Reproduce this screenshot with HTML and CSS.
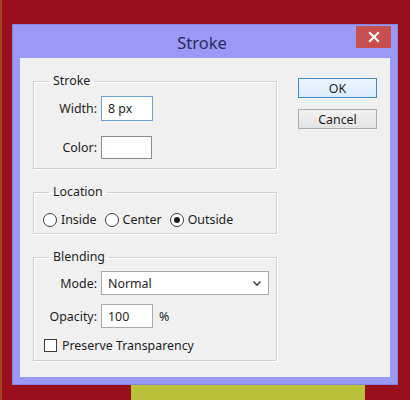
FILE: index.html
```html
<html>
<head>
	<title>Stroke</title>
	<meta name="viewport" content="width=device-width, initial-scale=1.0">
	<link rel="stylesheet" href="styles.css">
</head>
<body>
	<div id="dialog">
		<div id="titleBar">
			<span></span>
			<span id="title">Stroke</span>
			<span id="closeButton">
				<svg width="12" height="12" viewBox="0 0 12 12"><path d="M2 2 L10 10 M10 2 L2 10" stroke="#ffffff" stroke-width="2.2" stroke-linecap="square"/></svg>
			</span>
		</div>
		<div id="panel">
			<div id="groups">
				<fieldset class="group" id="strokeGroup">
					<legend>Stroke</legend>
					<div class="row">
						<label class="label">Width:</label>
						<div class="field focused small">8 px</div>
					</div>
					<div class="row">
						<label class="label">Color:</label>
						<div class="field small swatch"></div>
					</div>
				</fieldset>

				<fieldset class="group" id="locationGroup">
					<legend>Location</legend>
					<div class="radios">
						<label class="radio"><span class="circle"></span>Inside</label>
						<label class="radio"><span class="circle"></span>Center</label>
						<label class="radio"><span class="circle checked"></span>Outside</label>
					</div>
				</fieldset>

				<fieldset class="group" id="blendGroup">
					<legend>Blending</legend>
					<div class="row">
						<label class="label">Mode:</label>
						<div class="field select">
							<span>Normal</span>
							<svg width="10" height="7" viewBox="0 0 10 7"><path d="M1.5 1.5 L5 5 L8.5 1.5" fill="none" stroke="#444444" stroke-width="1.6"/></svg>
						</div>
					</div>
					<div class="row">
						<label class="label">Opacity:</label>
						<div class="field small">100</div>
						<span class="unit">%</span>
					</div>
					<label class="check"><span class="box"></span>Preserve Transparency</label>
				</fieldset>
			</div>
			<div id="buttons">
				<span class="button default">OK</span>
				<span class="button">Cancel</span>
			</div>
		</div>
	</div>
	<div id="dock"></div>
</body>
</html>
```

FILE: styles.css
```css
* {
	box-sizing: border-box;
}
body {
	font-family: "Noto Sans", sans-serif;
	font-size: 12.4px;
	color: #1e1e1e;
	background-color: #9a0f1c;
	border-left: 2px solid #a2441f;
	margin: 0;
	height: 400px;
	overflow: hidden;
}
#dialog {
	margin: 24px 0 0 10px;
	width: 386px;
	height: 361px;
	background-color: #9a9af6;
	border: 1px solid #8585dc;
}
#titleBar {
	display: grid;
	grid-template-columns: 1fr auto 1fr;
	height: 33px;
	padding-right: 6px;
}
#title {
	font-size: 16.5px;
	color: #2b2b5c;
	padding-top: 6px;
}
#closeButton {
	justify-self: end;
	margin-top: 1px;
	width: 35px;
	height: 22px;
	background-color: #c94e4e;
	display: flex;
	align-items: center;
	justify-content: center;
}
#panel {
	margin: 0 7px;
	height: 319px;
	background-color: #f0f0f0;
	display: flex;
	padding: 15px 12px 0 13px;
}
#groups {
	width: 244px;
}
.group {
	margin: 0 0 15px 0;
	padding: 0;
	border: 1px solid #d0d0d0;
	box-shadow: inset 1px 1px 0 #ffffff, 1px 1px 0 #ffffff;
}
.group legend {
	margin-left: 15px;
	padding: 0 4px;
	line-height: 16px;
}
#strokeGroup {
	height: 96px;
	padding-top: 7px;
}
#locationGroup {
	height: 50px;
}
#blendGroup {
	height: 112px;
	padding-top: 6px;
}
.row {
	display: flex;
	align-items: center;
	margin-bottom: 9px;
}
#strokeGroup .row {
	margin-bottom: 15px;
}
.label {
	width: 63px;
	text-align: right;
	margin-right: 4px;
}
.field {
	height: 24px;
	background-color: #ffffff;
	border: 1px solid #ababab;
	padding: 0 6px;
	display: flex;
	align-items: center;
}
.small {
	width: 52px;
}
.focused {
	border-color: #6fa0d8;
	height: 25px;
}
.swatch {
	height: 23px;
	width: 51px;
	border-color: #8c8c8c;
}
.select {
	width: 168px;
	justify-content: space-between;
	padding-right: 6px;
}
.unit {
	margin-left: 6px;
}
.radios {
	display: flex;
	padding: 11px 0 0 9px;
}
.radio {
	display: flex;
	align-items: center;
	margin-right: 8px;
}
.circle {
	width: 14px;
	height: 14px;
	border: 1px solid #3c3c3c;
	border-radius: 50%;
	background-color: #ffffff;
	margin-right: 4px;
	display: flex;
	align-items: center;
	justify-content: center;
}
.circle.checked::after {
	content: "";
	width: 6px;
	height: 6px;
	border-radius: 50%;
	background-color: #1e1e1e;
}
.check {
	display: flex;
	align-items: center;
	padding-left: 10px;
	margin-top: 6px;
}
.box {
	width: 13px;
	height: 13px;
	border: 1px solid #3c3c3c;
	background-color: #ffffff;
	margin-right: 5px;
}
#buttons {
	margin-left: 21px;
	padding-top: 5px;
	width: 79px;
}
.button {
	display: flex;
	align-items: center;
	justify-content: center;
	height: 20px;
	margin-bottom: 11px;
	border: 1px solid #acacac;
	background: linear-gradient(#f2f2f2, #e3e3e3);
}
.button.default {
	border-color: #3c8ad0;
	background: linear-gradient(#ecf4fc, #dcecfc);
}
#dock {
	margin-left: 129px;
	width: 234px;
	height: 16px;
	background-color: #b9c13a;
}
```
